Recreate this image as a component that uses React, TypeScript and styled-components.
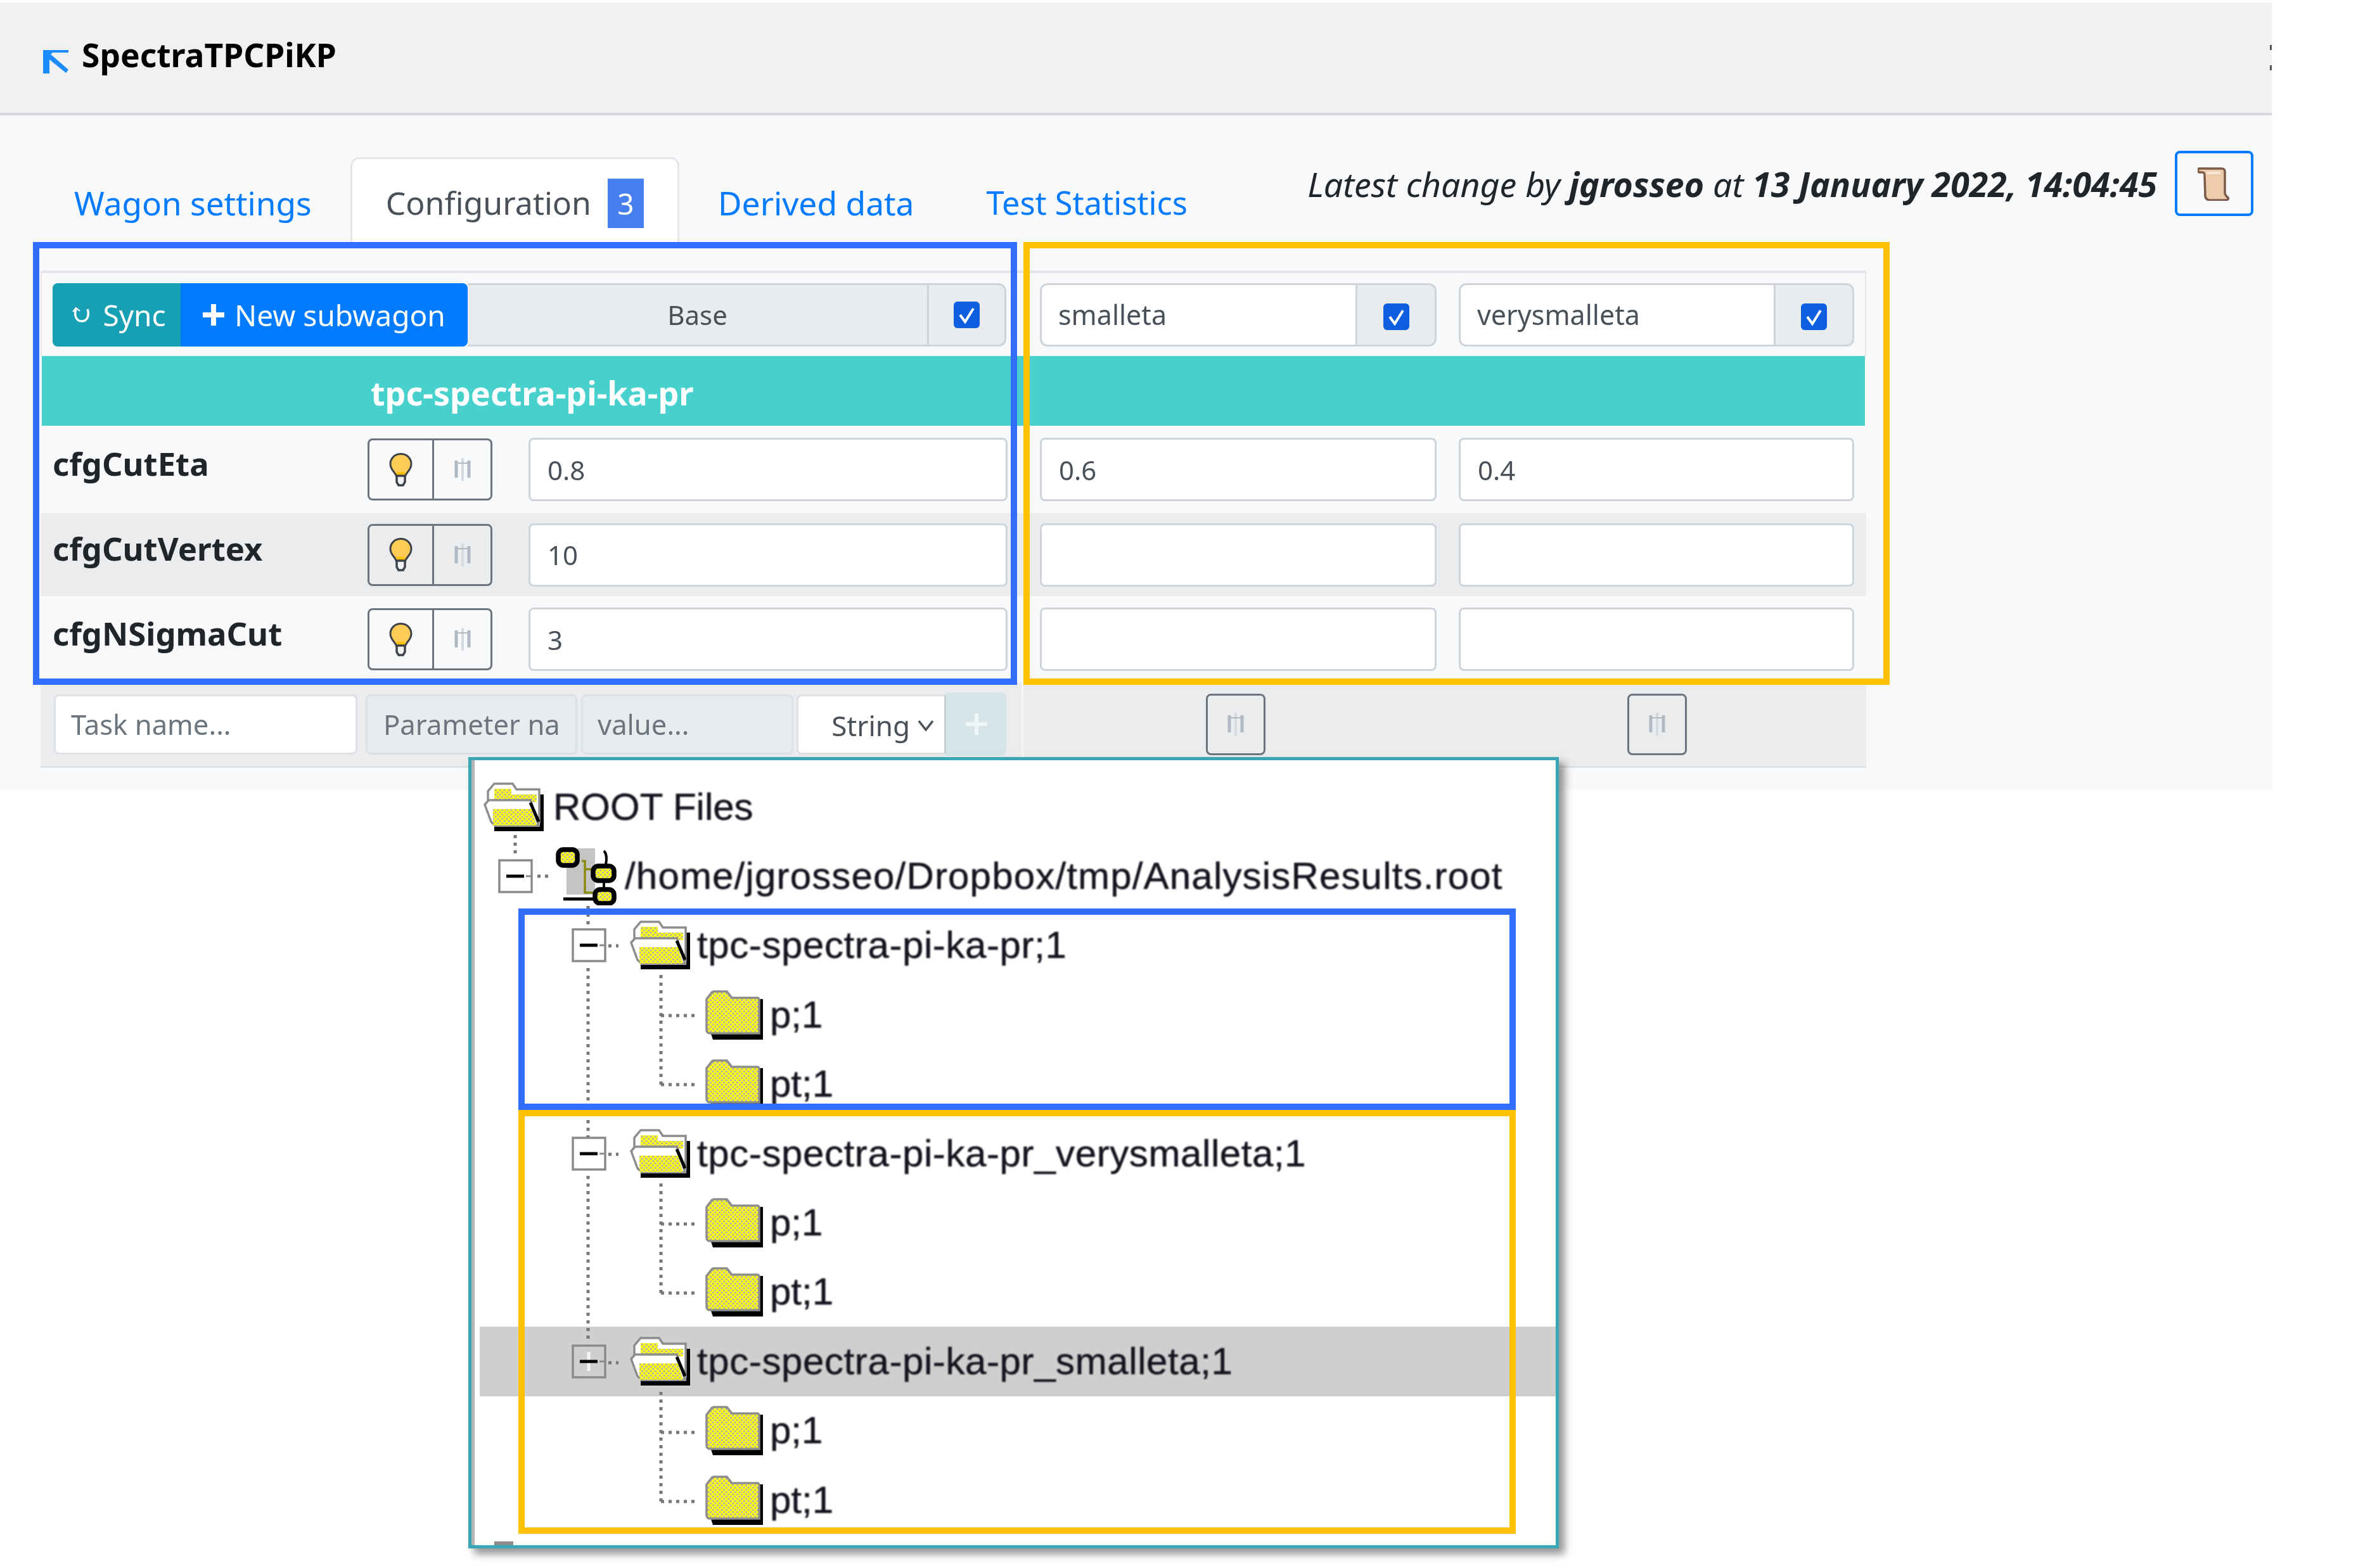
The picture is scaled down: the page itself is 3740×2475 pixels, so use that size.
import React from "react";
import styled, { createGlobalStyle } from "styled-components";

const Global = createGlobalStyle`
  html, body { margin: 0; padding: 0; background: #fff; }
  * { box-sizing: border-box; }
`;

const UI = `"Noto Sans", "Open Sans", sans-serif`;
const TEAL = "#48d1cc";
const GAP_BG = "#ebecee";

const Page = styled.div`
  position: relative;
  width: 3740px;
  height: 2475px;
  overflow: hidden;
  background: #fff;
  font-family: ${UI};
`;

const Surface = styled.div`
  width: 3585px;
  height: 1243px;
  margin-top: 4px;
  background: #f8f9fa;
  display: flex;
  flex-direction: column;
  filter: blur(0.6px);
`;

const Header = styled.header`
  height: 178px;
  flex: none;
  display: flex;
  align-items: center;
  padding-left: 68px;
  background: #f0f1f3;
  border-bottom: 4px solid #d6d8db;
`;

const BackIcon = styled.svg`
  width: 40px;
  height: 37px;
  margin: 13px 21px 0 0;
  flex: none;
`;

const Title = styled.h1`
  margin: -10px 0 0;
  font-size: 51.5px;
  line-height: 70px;
  font-weight: 700;
  color: #000;
`;

const Kebab = styled.div`
  margin-left: auto;
  display: flex;
  flex-direction: column;
  gap: 24px;
`;

const KebabDot = styled.span`
  width: 3px;
  height: 8px;
  background: #555;
`;

const TabBar = styled.nav`
  height: 200px;
  flex: none;
  display: flex;
  align-items: flex-end;
  gap: 8px;
  padding: 0 29px 0 64px;
`;

const Tab = styled.div<{ $active?: boolean; $size: number }>`
  height: 134px;
  padding: 35px 53px 0;
  display: flex;
  gap: 26px;
  font-size: ${(p) => p.$size}px;
  line-height: 68px;
  color: ${(p) => (p.$active ? "#495057" : "#007bff")};
  background: ${(p) => (p.$active ? "#fff" : "transparent")};
  border: ${(p) => (p.$active ? "3px solid #e3e6ea" : "3px solid transparent")};
  border-bottom: none;
  border-radius: 14px 14px 0 0;
  margin-left: ${(p) => (p.$active ? "0" : "-3px")};
  margin-right: ${(p) => (p.$active ? "0" : "-3px")};
`;

const Badge = styled.span`
  width: 57px;
  height: 78px;
  margin-top: -4px;
  background: #4680ee;
  color: #fff;
  font-size: 46px;
  line-height: 78px;
  text-align: center;
`;

const ChangeInfo = styled.div`
  margin-left: auto;
  align-self: flex-start;
  margin-top: 56px;
  display: flex;
  align-items: center;
  gap: 28px;
`;

const ChangeText = styled.p`
  margin: 0 0 -2px;
  font-size: 53.6px;
  font-style: italic;
  color: #212529;
  white-space: nowrap;
  b { font-weight: 700; }
`;

const LogButton = styled.div`
  width: 124px;
  height: 103px;
  border: 4px solid #007bff;
  border-radius: 8px;
  display: flex;
  align-items: center;
  justify-content: center;
`;

const Table = styled.div`
  width: 2881px;
  margin: 45px 0 0 64px;
`;

const GRID = "770px 781px 670px 660px";

const WagonRow = styled.div`
  height: 135px;
  display: grid;
  grid-template-columns: ${GRID};
  align-items: center;
  border-top: 4px solid #e3e5e8;
  box-shadow: inset 2px 0 0 #e3e5e8, inset -2px 0 0 #e3e5e8;
`;

const BaseCell = styled.div`
  grid-column: span 2;
  padding: 0 27px 0 19px;
  display: flex;
  height: 100px;
`;

const SyncButton = styled.div`
  width: 202px;
  padding-left: 8px;
  display: flex;
  align-items: center;
  justify-content: center;
  gap: 18px;
  background: #17a0b4;
  color: #fff;
  font-size: 46px;
  line-height: 60px;
  border-radius: 8px 0 0 8px;
`;

const NewButton = styled.div`
  width: 453px;
  display: flex;
  align-items: center;
  justify-content: center;
  gap: 16px;
  background: #007bff;
  color: #fff;
  font-size: 46px;
  white-space: nowrap;
  border-radius: 0 8px 8px 0;
`;

const BaseLabel = styled.div`
  flex: 1;
  display: flex;
  align-items: center;
  justify-content: center;
  background: #e9ecef;
  border-top: 3px solid #ced4da;
  border-bottom: 3px solid #ced4da;
  color: #495057;
  font-size: 42px;
`;

const CheckAddon = styled.div<{ $low?: boolean; $w: number }>`
  width: ${(p) => p.$w}px;
  flex: none;
  display: flex;
  align-items: center;
  justify-content: center;
  background: #e9ecef;
  border: 3px solid #ced4da;
  border-radius: 0 12px 12px 0;
  padding-top: ${(p) => (p.$low ? "6px" : "0")};
`;

const CheckBox = styled.svg`
  width: 41px;
  height: 42px;
`;

const NamedCell = styled.div<{ $l: number; $r: number }>`
  padding: 0 ${(p) => p.$r}px 0 ${(p) => p.$l}px;
  display: flex;
  height: 100px;
`;

const NameField = styled.div`
  flex: 1;
  display: flex;
  align-items: center;
  padding-left: 26px;
  background: #fff;
  border: 3px solid #ced4da;
  border-right: none;
  border-radius: 12px 0 0 12px;
  color: #495057;
  font-size: 43px;
`;

const TealRow = styled.div`
  height: 110px;
  margin: 0 2px;
  padding: 4px 0 0 519px;
  display: flex;
  align-items: center;
  background: ${TEAL};
  color: #fff;
  font-size: 52px;
  font-weight: 700;
`;

const ParamRow = styled.div<{ $h: number; $shade?: boolean }>`
  height: ${(p) => p.$h}px;
  display: grid;
  grid-template-columns: ${GRID};
  align-items: center;
  background: ${(p) => (p.$shade ? GAP_BG : "#f8f9fa")};
`;

const ParamHead = styled.div`
  padding-left: 19px;
  display: flex;
  align-items: center;
`;

const ParamName = styled.span`
  width: 497px;
  margin-top: -20px;
  font-size: 50.8px;
  font-weight: 700;
  color: #212529;
`;

const ToolPair = styled.div`
  display: flex;
  height: 98px;
`;

const ToolButton = styled.div<{ $side: "left" | "right" | "both" }>`
  width: ${(p) => (p.$side === "left" ? "105px" : p.$side === "right" ? "95px" : "94px")};
  display: flex;
  align-items: center;
  justify-content: center;
  border: 3.5px solid #6c757d;
  margin-left: ${(p) => (p.$side === "right" ? "-3px" : "0")};
  border-radius: ${(p) =>
    p.$side === "left" ? "8px 0 0 8px" : p.$side === "right" ? "0 8px 8px 0" : "8px"};
`;

const ValueCell = styled.div<{ $l: number; $r: number }>`
  padding: 0 ${(p) => p.$r}px 0 ${(p) => p.$l}px;
`;

const ValueField = styled.div`
  height: 100px;
  display: flex;
  align-items: center;
  padding-left: 27px;
  background: #fff;
  border: 3px solid #ced4da;
  border-radius: 8px;
  color: #495057;
  font-size: 42px;
`;

const Footer = styled.div`
  height: 135px;
  display: grid;
  grid-template-columns: 1551px 670px 660px;
  align-items: center;
  background: ${GAP_BG};
  border-bottom: 3px solid #dfe2e5;
`;

const AddForm = styled.div`
  height: 100%;
  padding-left: 21px;
  display: flex;
  align-items: center;
  border-right: 3px solid #f4f5f6;
`;

const FormField = styled.div<{ $w: number; $ml: number; $fill?: boolean; $pad: number }>`
  width: ${(p) => p.$w}px;
  height: 95px;
  margin-left: ${(p) => p.$ml}px;
  display: flex;
  align-items: center;
  padding-left: ${(p) => p.$pad}px;
  background: ${(p) => (p.$fill ? "#e9ecef" : "#fff")};
  border: 3px solid #dde1e5;
  border-radius: 8px;
  color: #6c757d;
  font-size: 43.6px;
  white-space: nowrap;
  overflow: hidden;
`;

const SelectField = styled.div`
  width: 236px;
  height: 95px;
  margin-left: 5px;
  display: flex;
  align-items: center;
  justify-content: flex-end;
  gap: 12px;
  padding: 3px 16px 0 0;
  background: #fff;
  border: 3px solid #dde1e5;
  border-right: 3px solid #c4ced3;
  border-radius: 8px 0 0 8px;
  color: #495057;
  font-size: 44px;
`;

const PlusAddon = styled.div`
  width: 95px;
  height: 100px;
  display: flex;
  align-items: center;
  justify-content: center;
  background: #d6e4e8;
  border-radius: 0 8px 8px 0;
`;

const FooterAction = styled.div`
  display: flex;
  justify-content: center;
  height: 97px;
`;

/* annotation rectangles and the inset picture lie over the page */
const Frame = styled.div<{ $c: string; $x: number; $y: number; $w: number; $h: number }>`
  position: absolute;
  left: ${(p) => p.$x}px;
  top: ${(p) => p.$y}px;
  width: ${(p) => p.$w}px;
  height: ${(p) => p.$h}px;
  border: 10px solid ${(p) => p.$c};
  pointer-events: none;
`;

const TreePanel = styled.div`
  position: absolute;
  left: 739px;
  top: 1195px;
  width: 1721px;
  height: 1249px;
  padding-top: 19px;
  background: #fff;
  border: 5px solid #38a6b5;
  box-shadow: inset 5px 0 0 #b4b4b4, 9px 9px 12px rgba(0, 0, 0, 0.42);
  overflow: hidden;
`;

const TreeRow = styled.div<{ $indent: number; $selected?: boolean }>`
  height: 109.4px;
  display: flex;
  align-items: center;
  margin-left: ${(p) => (p.$selected ? "13px" : "0")};
  padding-left: ${(p) => p.$indent - (p.$selected ? 13 : 0)}px;
  background: ${(p) => (p.$selected ? "#cfcfcf" : "transparent")};
`;

const TreeLabel = styled.span<{ $gap: number; $track?: number }>`
  margin-left: ${(p) => p.$gap}px;
  font-family: "Liberation Sans", Arial, sans-serif;
  font-size: 60px;
  line-height: 70px;
  letter-spacing: ${(p) => p.$track ?? 0}px;
  color: #14141f;
  white-space: nowrap;
  -webkit-text-stroke: 0.5px #14141f;
  filter: blur(0.8px);
`;

const Pixel = styled.svg<{ $ml?: number }>`
  flex: none;
  margin-left: ${(p) => p.$ml ?? 0}px;
  filter: blur(0.5px);
`;

const Connectors = styled.svg`
  position: absolute;
  left: 0;
  top: 0;
  width: 1711px;
  height: 1239px;
  filter: blur(0.4px);
`;

const StubBar = styled.span`
  position: absolute;
  left: 36px;
  bottom: 0;
  width: 30px;
  height: 6px;
  background: #8d8d8d;
`;

const Back = () => (
  <BackIcon viewBox="0 0 40 37">
    <path d="M0 37V0h40v4H15l-3 3 5 4 23 20-4 5L10 15v22z" fill="#1a8cff" />
  </BackIcon>
);

const Check = () => (
  <CheckBox viewBox="0 0 41 42">
    <rect width="41" height="42" rx="6" fill="#0d5fe0" />
    <path d="M10 21l8 11 13-21" fill="none" stroke="#fff" strokeWidth="4" />
  </CheckBox>
);

const Bulb = () => (
  <svg width="37" height="53" viewBox="0 0 37 53">
    <path
      d="M18.5 1.5C9 1.5 2 8.500 2 17.500c0 6 3 9.500 6 13 2 2.500 3 4 3.500 6.500h14c.5-2.500 1.500-4 3.500-6.500 3-3.500 6-7 6-13C35 8.500 28 1.500 18.500 1.500z"
      fill="#ffcd56"
      stroke="#3e4349"
      strokeWidth="3"
    />
    <path d="M12 30h13v7H12z" fill="#ffc107" />
    <path d="M12 36h13v10l-3 5h-7l-3-5z" fill="#f2f2f2" stroke="#3e4349" strokeWidth="3.500" />
  </svg>
);

const Pin = () => (
  <svg width="26" height="38" viewBox="0 0 26 38">
    <path d="M3 5v27M23 5v27" stroke="#b0b9c1" strokeWidth="5" />
    <path d="M13 1v36" stroke="#d6dade" strokeWidth="4" />
    <path d="M3 9h20" stroke="#b0b9c1" strokeWidth="2" />
  </svg>
);

const ScrollIcon = () => (
  <svg width="52" height="54" viewBox="0 0 52 54">
    <path
      d="M2 3h36c4 0 5 2 5 6v32c0 3 1 5 5 8 1 2-1 4-4 4H20c-5 0-7-2-8-6l-1-33c0-4-1-5-4-5H3C0 9 0 4 2 3z"
      fill="#eecbab"
      stroke="#7a5a48"
      strokeWidth="3.500"
    />
    <path d="M14 10h22" stroke="#f9e6d4" strokeWidth="4" />
  </svg>
);

const SyncGlyph = () => (
  <svg width="30" height="28" viewBox="0 0 30 28">
    <path d="M6 5c-3 8-1 19 9 19s12-11 9-19" fill="none" stroke="#fff" strokeWidth="3.500" />
    <path d="M1 9l5-6 6 5" fill="none" stroke="#fff" strokeWidth="2" />
  </svg>
);

const PlusGlyph = ({ color, thin }: { color: string; thin?: boolean }) => (
  <svg width="34" height="34" viewBox="0 0 34 34">
    <path d="M17 0v34M0 17h34" stroke={color} strokeWidth={thin ? 6 : 8} />
  </svg>
);

const Chevron = () => (
  <svg width="26" height="20" viewBox="0 0 26 20">
    <path d="M2 3l11 14L24 3" fill="none" stroke="#495057" strokeWidth="3.500" />
  </svg>
);

const Dither = () => (
  <defs>
    <pattern id="dither" width="7" height="7" patternUnits="userSpaceOnUse">
      <rect width="7" height="7" fill="#ffff10" />
      <circle cx="1.750" cy="1.750" r="1.700" fill="#b4b4a0" />
      <circle cx="5.250" cy="5.250" r="1.700" fill="#b4b4a0" />
    </pattern>
  </defs>
);

const ClosedFolder = () => (
  <Pixel width="91" height="78" viewBox="0 0 91 78">
    <Dither />
    <path d="M8 66h76V14h7v64H12z" fill="#000" />
    <path
      d="M2 14l7-9q2-3 5-3h20l8 10h40q3 0 3 4v52H8q-6 0-6-6z"
      fill="url(#dither)"
      stroke="#8d8d8d"
      strokeWidth="3.500"
    />
  </Pixel>
);

const OpenFolder = () => (
  <Pixel width="96" height="78" viewBox="0 0 96 78">
    <Dither />
    <path d="M89 19h6v58H17v-7h72z" fill="#000" />
    <path d="M7 34V14L17 2h29l6 9h36v52H20z" fill="#fff" stroke="#8d8d8d" strokeWidth="3.500" />
    <path d="M17 10h27v9h40v12H17z" fill="url(#dither)" />
    <path d="M2 35l6-7h66l13 40H18l-6-6z" fill="#fff" stroke="#8d8d8d" strokeWidth="3.500" />
    <path d="M15 42h61l8 26H15z" fill="url(#dither)" />
    <path d="M74 32l13 30" stroke="#000" strokeWidth="5" />
  </Pixel>
);

const RootFile = () => (
  <Pixel width="97" height="92" viewBox="0 0 97 92" $ml={35}>
    <Dither />
    <rect x="18" y="2" width="45" height="73" fill="#c4c4c4" />
    <path d="M42 22h5v50h14M47 35h10" fill="none" stroke="#8a8a10" strokeWidth="3.500" />
    <path d="M13 82h48" stroke="#000" strokeWidth="5" />
    <path d="M77 6q6 6 3 22M77 55v10" fill="none" stroke="#000" strokeWidth="4" />
    <rect x="5" y="4" width="30" height="25" rx="8" fill="url(#dither)" stroke="#000" strokeWidth="7.500" />
    <rect x="60" y="30" width="33" height="23" rx="8" fill="url(#dither)" stroke="#000" strokeWidth="7.500" />
    <rect x="63" y="67" width="30" height="22" rx="8" fill="url(#dither)" stroke="#000" strokeWidth="7.500" />
  </Pixel>
);

const MinusBox = ({ selected }: { selected?: boolean }) => (
  <Pixel width="55" height="54" viewBox="0 0 55 54">
    <rect x="2" y="2" width="51" height="50" fill={selected ? "#cfcfcf" : "#fff"} stroke="#8a8a8a" strokeWidth="3.500" />
    {selected && <path d="M27 12v30" stroke="#f4f4f4" strokeWidth="5" />}
    <path d="M13 27h28" stroke="#000" strokeWidth="5" />
    <path d="M44 27h9" stroke="#8a8a8a" strokeWidth="3" />
  </Pixel>
);

const Dots = ({ d }: { d: string }) => (
  <path d={d} fill="none" stroke="#777" strokeWidth="5" strokeDasharray="5 7" />
);

const TreeLines = () => (
  <Connectors viewBox="744 1200 1711 1239">
    <Dots d="M813 1318V1354" />
    <Dots d="M848 1383H868" />
    <Dots d="M928 1430V1464M928 1528V1795M928 1856V2120" />
    <Dots d="M960 1493H976M960 1822H976M960 2151H976" />
    {[1493, 1822, 2151].map((y) => (
      <Dots key={y} d={`M1043 ${y + 46}V${y + 219}M1043 ${y + 110}H1096M1043 ${y + 219}H1096`} />
    ))}
  </Connectors>
);

const params = [
  { name: "cfgCutEta", h: 138, base: "0.8", a: "0.6", b: "0.4" },
  { name: "cfgCutVertex", h: 131, base: "10", a: "", b: "", shade: true },
  { name: "cfgNSigmaCut", h: 136, base: "3", a: "", b: "" },
];

const subFolders = ["p;1", "pt;1"];

const FolderGap = styled.span`
  width: 37px;
  flex: none;
`;

const Group = ({ name, selected }: { name: string; selected?: boolean }) => (
  <>
    <TreeRow $indent={158} $selected={selected}>
      <MinusBox selected={selected} />
      <FolderGap />
      <OpenFolder />
      <TreeLabel $gap={10} $track={0.6}>
        {name}
      </TreeLabel>
    </TreeRow>
    {subFolders.map((f) => (
      <TreeRow key={f} $indent={369}>
        <ClosedFolder />
        <TreeLabel $gap={11}>{f}</TreeLabel>
      </TreeRow>
    ))}
  </>
);

export default function App() {
  return (
    <Page>
      <Global />
      <Surface>
        <Header>
          <Back />
          <Title>SpectraTPCPiKP</Title>
          <Kebab>
            <KebabDot />
            <KebabDot />
          </Kebab>
        </Header>
        <TabBar>
          <Tab $size={51.3}>Wagon settings</Tab>
          <Tab $active $size={50}>
            Configuration
            <Badge>3</Badge>
          </Tab>
          <Tab $size={51.5}>Derived data</Tab>
          <Tab $size={50.4}>Test Statistics</Tab>
          <ChangeInfo>
            <ChangeText>
              Latest change by <b>jgrosseo</b> at <b>13 January 2022, 14:04:45</b>
            </ChangeText>
            <LogButton>
              <ScrollIcon />
            </LogButton>
          </ChangeInfo>
        </TabBar>
        <Table>
          <WagonRow>
            <BaseCell>
              <SyncButton>
                <SyncGlyph />
                Sync
              </SyncButton>
              <NewButton>
                <PlusGlyph color="#fff" />
                New subwagon
              </NewButton>
              <BaseLabel>Base</BaseLabel>
              <CheckAddon $w={125}>
                <Check />
              </CheckAddon>
            </BaseCell>
            <NamedCell $l={26} $r={18}>
              <NameField>smalleta</NameField>
              <CheckAddon $w={128} $low>
                <Check />
              </CheckAddon>
            </NamedCell>
            <NamedCell $l={17} $r={19}>
              <NameField>verysmalleta</NameField>
              <CheckAddon $w={127} $low>
                <Check />
              </CheckAddon>
            </NamedCell>
          </WagonRow>
          <TealRow>tpc-spectra-pi-ka-pr</TealRow>
          {params.map((p) => (
            <ParamRow key={p.name} $h={p.h} $shade={p.shade}>
              <ParamHead>
                <ParamName>{p.name}</ParamName>
                <ToolPair>
                  <ToolButton $side="left">
                    <Bulb />
                  </ToolButton>
                  <ToolButton $side="right">
                    <Pin />
                  </ToolButton>
                </ToolPair>
              </ParamHead>
              <ValueCell $l={0} $r={25}>
                <ValueField>{p.base}</ValueField>
              </ValueCell>
              <ValueCell $l={26} $r={18}>
                <ValueField>{p.a}</ValueField>
              </ValueCell>
              <ValueCell $l={17} $r={19}>
                <ValueField>{p.b}</ValueField>
              </ValueCell>
            </ParamRow>
          ))}
          <Footer>
            <AddForm>
              <FormField $w={479} $ml={0} $pad={24}>
                Task name...
              </FormField>
              <FormField $w={334} $ml={13} $fill $pad={25}>
                Parameter na
              </FormField>
              <FormField $w={335} $ml={6} $fill $pad={23}>
                value...
              </FormField>
              <SelectField>
                String
                <Chevron />
              </SelectField>
              <PlusAddon>
                <PlusGlyph color="#eef5f6" thin />
              </PlusAddon>
            </AddForm>
            <FooterAction>
              <ToolButton $side="both">
                <Pin />
              </ToolButton>
            </FooterAction>
            <FooterAction>
              <ToolButton $side="both">
                <Pin />
              </ToolButton>
            </FooterAction>
          </Footer>
        </Table>
      </Surface>

      <Frame $c="#316dff" $x={52} $y={382} $w={1553} $h={699} />
      <Frame $c="#ffc000" $x={1615} $y={382} $w={1367} $h={699} />

      <TreePanel>
        <TreeRow $indent={19}>
          <OpenFolder />
          <TreeLabel $gap={14}>ROOT Files</TreeLabel>
        </TreeRow>
        <TreeRow $indent={42}>
          <MinusBox />
          <RootFile />
          <TreeLabel $gap={13} $track={1.17}>
            /home/jgrosseo/Dropbox/tmp/AnalysisResults.root
          </TreeLabel>
        </TreeRow>
        <Group name="tpc-spectra-pi-ka-pr;1" />
        <Group name="tpc-spectra-pi-ka-pr_verysmalleta;1" />
        <Group name="tpc-spectra-pi-ka-pr_smalleta;1" selected />
        <TreeLines />
        <StubBar />
      </TreePanel>

      <Frame $c="#316dff" $x={818} $y={1434} $w={1574} $h={318} />
      <Frame $c="#ffc000" $x={818} $y={1752} $w={1574} $h={669} />
    </Page>
  );
}
